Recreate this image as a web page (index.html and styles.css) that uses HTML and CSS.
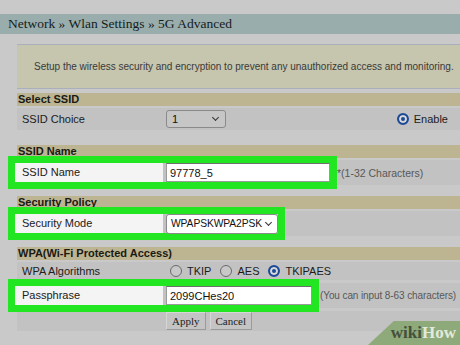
FILE: index.html
```html
<!DOCTYPE html>
<html>
<head lang="en">
    <meta charset="UTF-8">
    <title>5G Advanced</title>
    <link rel="stylesheet" href="styles.css">
</head>
<body>
    <div class="crumb">Network &raquo; Wlan Settings &raquo; 5G Advanced</div>
    <div class="panel">
        <div class="desc">Setup the wireless security and encryption to prevent any unauthorized access and monitoring.</div>

        <div class="sec">Select SSID</div>
        <div class="row">
            <div class="lbl">SSID Choice</div>
            <div class="val">
                <span class="sel grey">1<i class="chev"></i></span>
                <span class="enable"><i class="radio on"></i>Enable</span>
            </div>
        </div>
        <div class="spacer first"></div>

        <div class="sec">SSID Name</div>
        <div class="row hl">
            <div class="mark">
                <div class="lbl">SSID Name</div>
                <span class="inp w-name">97778_5</span>
            </div>
            <span class="hint">*(1-32 Characters)</span>
        </div>
        <div class="spacer"></div>

        <div class="sec">Security Policy</div>
        <div class="row hl">
            <div class="mark">
                <div class="lbl">Security Mode</div>
                <span class="sel white">WPAPSKWPA2PSK<i class="chev"></i></span>
            </div>
        </div>
        <div class="spacer"></div>

        <div class="sec">WPA(Wi-Fi Protected Access)</div>
        <div class="row short">
            <div class="lbl">WPA Algorithms</div>
            <div class="val radios">
                <span><i class="radio"></i>TKIP</span>
                <span><i class="radio"></i>AES</span>
                <span><i class="radio on"></i>TKIPAES</span>
            </div>
        </div>
        <div class="row hl">
            <div class="mark">
                <div class="lbl">Passphrase</div>
                <span class="inp w-pass">2099CHes20</span>
            </div>
            <span class="hint small">(You can input 8-63 characters)</span>
        </div>
        <div class="row btns">
            <div class="lbl"></div>
            <div class="val">
                <span class="btn">Apply</span>
                <span class="btn">Cancel</span>
            </div>
        </div>
    </div>
    <div class="wiki"><b>wiki</b><span>How</span></div>
</body>
</html>
```

FILE: styles.css
```css
* {
    margin:0;
    padding:0;
    box-sizing: border-box;
}
body {
    width:460px;
    height:345px;
    overflow:hidden;
    background:#c9c9c9;
    font-family: "Liberation Sans", Arial, sans-serif;
    font-size:11px;
    color:#1c1c1c;
    padding-top:14px;
    position:relative;
}
.crumb {
    height:20px;
    line-height:20px;
    background:#9aadad;
    font-family: "Liberation Serif", "Times New Roman", serif;
    font-size:13.5px;
    color:#141c1c;
    padding-left:8px;
}
.panel {
    margin:10px 0 0 17px;
    padding-bottom:2px;
    width:443px;
}
.desc {
    height:45px;
    line-height:43px;
    background:#c6c5ae;
    border-top:1px solid #a9b0bc;
    border-bottom:1px solid #a9b0bc;
    padding-left:17px;
    font-size:10px;
    color:#3a3a38;
    margin-bottom:4px;
}
.sec {
    height:13px;
    line-height:13px;
    background:#bdb592;
    font-weight:bold;
    padding-left:1px;
    color:#1a1a14;
    margin-bottom:2px;
}
.row {
    display:flex;
    align-items:center;
    height:22px;
    background:#c2c2c2;
    margin-bottom:3px;
}
.row.hl {
    height:25px;
}
.row.short {
    height:18px;
}
.row.btns {
    height:20px;
    margin-bottom:0;
}
.spacer {
    height:8px;
}
.spacer.first {
    height:12px;
}
.lbl {
    width:149px;
    padding-left:5px;
    flex-shrink:0;
    color:#202020;
}
.val {
    display:flex;
    align-items:center;
    flex:1;
    padding-right:8px;
}
.mark {
    display:flex;
    align-items:center;
    gap:3px;
    height:19px;
    margin-left:-2px;
    outline:7px solid #23e623;
}
.mark .lbl {
    width:148px;
    height:19px;
    line-height:19px;
    background:#f4f4f4;
    padding-left:7px;
}
.inp {
    height:19px;
    line-height:19px;
    background:#fff;
    border:1px solid #9a9a9a;
    border-top-color:#6e6e6e;
    padding-left:3px;
    color:#111;
}
.w-name {
    width:164px;
}
.w-pass {
    width:146px;
}
.hint {
    margin-left:7px;
    color:#585858;
    white-space:nowrap;
    font-size:10.5px;
}
.hint.small {
    margin-left:8px;
    font-size:10px;
    letter-spacing:-0.1px;
}
.sel {
    position:relative;
    display:inline-block;
    height:18px;
    line-height:16px;
    border:1px solid #8a8a8a;
    border-radius:3px;
    padding-left:5px;
    color:#111;
}
.sel.grey {
    width:60px;
    background:#c6c6c6;
}
.sel.white {
    width:112px;
    height:20px;
    line-height:18px;
    background:#fff;
    padding-left:4px;
    font-size:10.3px;
    letter-spacing:-0.1px;
}
.chev {
    position:absolute;
    right:7px;
    top:4px;
    width:5px;
    height:5px;
    border-right:1.5px solid #333;
    border-bottom:1.5px solid #333;
    transform:rotate(45deg);
}
.white .chev {
    right:6px;
    top:5px;
}
.enable {
    display:flex;
    align-items:center;
    margin-left:auto;
    margin-right:4px;
}
.radio {
    display:inline-block;
    width:12px;
    height:12px;
    border-radius:50%;
    border:1px solid #6a6a6a;
    background:#c8c8c8;
    margin-right:5px;
}
.radio.on {
    border:2px solid #1d4a98;
    background:#1d4a98;
    box-shadow:inset 0 0 0 2px #d8d8d8;
}
.radios {
    gap:9px;
    padding-left:4px;
}
.radios span {
    display:flex;
    align-items:center;
}
.btn {
    display:inline-block;
    height:18px;
    line-height:17px;
    padding:0 5px;
    margin-right:4px;
    background:#c4c4c4;
    border:1px solid #d6d6d6;
    border-right-color:#9a9a9a;
    border-bottom-color:#9a9a9a;
    font-family: "Liberation Serif", "Times New Roman", serif;
    font-size:11px;
    color:#222;
}
.wiki {
    position:absolute;
    right:0;
    bottom:0;
    width:92px;
    height:24px;
    background:#8ea97a;
    clip-path:polygon(28% 0, 100% 0, 100% 100%, 0 100%);
    text-align:right;
    padding-right:4px;
    font-family: "Liberation Serif", "Times New Roman", serif;
    font-size:17px;
    line-height:24px;
    font-weight:bold;
}
.wiki b {
    color:#44503c;
}
.wiki span {
    color:#e2eadb;
}
```
